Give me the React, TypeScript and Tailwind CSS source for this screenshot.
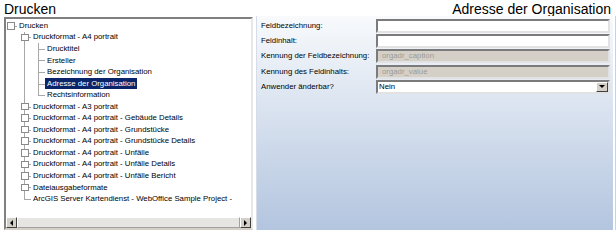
import React from 'react';

type Node = {
  label: string;
  level: number;
  box?: boolean;
  last?: boolean;
  guides?: boolean[];
  selected?: boolean;
};

const tree: Node[] = [
  { label: 'Drucken', level: 0, box: true, last: true, guides: [] },
  { label: 'Druckformat - A4 portrait', level: 1, box: true, guides: [false] },
  { label: 'Drucktitel', level: 2, guides: [false, true] },
  { label: 'Ersteller', level: 2, guides: [false, true] },
  { label: 'Bezeichnung der Organisation', level: 2, guides: [false, true] },
  { label: 'Adresse der Organisation', level: 2, guides: [false, true], selected: true },
  { label: 'Rechtsinformation', level: 2, last: true, guides: [false, true] },
  { label: 'Druckformat - A3 portrait', level: 1, box: true, guides: [false] },
  { label: 'Druckformat - A4 portrait - Gebäude Details', level: 1, box: true, guides: [false] },
  { label: 'Druckformat - A4 portrait - Grundstücke', level: 1, box: true, guides: [false] },
  { label: 'Druckformat - A4 portrait - Grundstücke Details', level: 1, box: true, guides: [false] },
  { label: 'Druckformat - A4 portrait - Unfälle', level: 1, box: true, guides: [false] },
  { label: 'Druckformat - A4 portrait - Unfälle Details', level: 1, box: true, guides: [false] },
  { label: 'Druckformat - A4 portrait - Unfälle Bericht', level: 1, box: true, guides: [false] },
  { label: 'Dateiausgabeformate', level: 1, box: true, guides: [false] },
  { label: 'ArcGIS Server Kartendienst - WebOffice Sample Project -', level: 1, last: true, guides: [false] },
];

function TreeRow({ node }: { node: Node }) {
  return (
    <div className="flex h-[11.55px] items-stretch whitespace-nowrap">
      {node.guides!.map((g, i) => (
        <div key={i} className="relative w-[14px] shrink-0">
          {g && <div className="absolute left-[4px] top-0 bottom-0 w-px bg-[#a8a8a8]" />}
        </div>
      ))}
      <div className="relative w-[11px] shrink-0">
        {node.level > 0 && (
          <div
            className={`absolute left-[4px] top-0 w-px bg-[#a8a8a8] ${node.last ? 'h-1/2' : 'bottom-0'}`}
          />
        )}
        <div className="absolute left-[4px] right-0 top-1/2 h-px bg-[#a8a8a8]" />
        {node.box && (
          <div className="absolute left-[1px] top-[2px] h-[7.5px] w-[7.5px] border border-[#8a8a8a] bg-white" />
        )}
      </div>
      <div
        className={`flex items-center px-[2px] text-[7.8px] leading-none ${
          node.selected ? 'bg-[#0a246a] text-white' : 'text-black'
        }`}
      >
        {node.label}
      </div>
    </div>
  );
}

function ScrollButton({ dir }: { dir: 'left' | 'right' }) {
  return (
    <div className="flex h-full w-[11px] shrink-0 items-center justify-center border border-t-white border-l-white border-r-[#404040] border-b-[#404040] bg-[#d4d0c8]">
      {dir === 'left' ? (
        <div className="h-0 w-0 border-y-[3px] border-r-[3px] border-y-transparent border-r-black" />
      ) : (
        <div className="h-0 w-0 border-y-[3px] border-l-[3px] border-y-transparent border-l-black" />
      )}
    </div>
  );
}

function Field({ label, children }: { label: string; children: React.ReactNode }) {
  return (
    <div className="flex h-[15.3px] items-center">
      <div className="w-[119px] shrink-0 pl-[4px] text-[7.8px] leading-none text-black">{label}</div>
      {children}
    </div>
  );
}

const inputCls =
  'flex h-[14px] flex-1 items-center border-2 border-t-[#7b7b7b] border-l-[#7b7b7b] border-r-[#e2e2e2] border-b-[#e2e2e2] px-[4px] text-[7.8px] leading-none';

export default function App() {
  return (
    <div className="flex h-[233px] w-[616px] flex-col bg-white font-['Liberation_Sans',Arial,sans-serif]">
      <div className="flex h-[16px] items-end justify-between pl-[4px] pr-[5px] text-[14px] leading-[14px] text-black">
        <span>Drucken</span>
        <span>Adresse der Organisation</span>
      </div>
      <div className="flex flex-1 pb-[3px]">
        {/* tree */}
        <div className="ml-[4px] mt-[1px] flex w-[249px] flex-col border-2 border-t-[#808080] border-l-[#808080] border-r-[#e8e8e8] border-b-[#d4d0c8] bg-white">
          <div className="flex-1 overflow-hidden pt-[1px]">
            {tree.map((n) => (
              <TreeRow key={n.label} node={n} />
            ))}
          </div>
          <div className="flex h-[11px] bg-[#ecebe8]">
            <ScrollButton dir="left" />
            <div className="flex-1 border border-t-white border-l-white border-r-[#a0a0a0] border-b-[#a0a0a0] bg-[#e6e5e2]" />
            <ScrollButton dir="right" />
          </div>
        </div>

        {/* form panel */}
        <div className="ml-[3px] flex w-[357px] flex-col border-l border-[#d6dde8] bg-gradient-to-b from-[#f8fafc] to-[#b3c5df] pr-[3px] pt-[2px]">
          <Field label="Feldbezeichnung:">
            <div className={`${inputCls} bg-white`} />
          </Field>
          <Field label="Feldinhalt:">
            <div className={`${inputCls} bg-white`} />
          </Field>
          <Field label="Kennung der Feldbezeichnung:">
            <div className={`${inputCls} bg-[#d4d0c8] text-[#9e9b94]`}>orgadr_caption</div>
          </Field>
          <Field label="Kennung des Feldinhalts:">
            <div className={`${inputCls} bg-[#d4d0c8] text-[#9e9b94]`}>orgadr_value</div>
          </Field>
          <Field label="Anwender änderbar?">
            <div className="flex h-[14px] flex-1 items-center border-2 border-t-[#7b7b7b] border-l-[#7b7b7b] border-r-[#e2e2e2] border-b-[#e2e2e2] bg-white pl-[1px] text-[7.8px] leading-none text-black">
              <span className="flex-1">Nein</span>
              <div className="flex h-full w-[12px] items-center justify-center border border-t-white border-l-white border-r-[#404040] border-b-[#404040] bg-[#d4d0c8]">
                <div className="h-0 w-0 border-x-[3px] border-t-[3px] border-x-transparent border-t-black" />
              </div>
            </div>
          </Field>
        </div>

        <div className="ml-[1px] w-[2px] border-r border-[#c9d3e0]" />
      </div>
    </div>
  );
}
